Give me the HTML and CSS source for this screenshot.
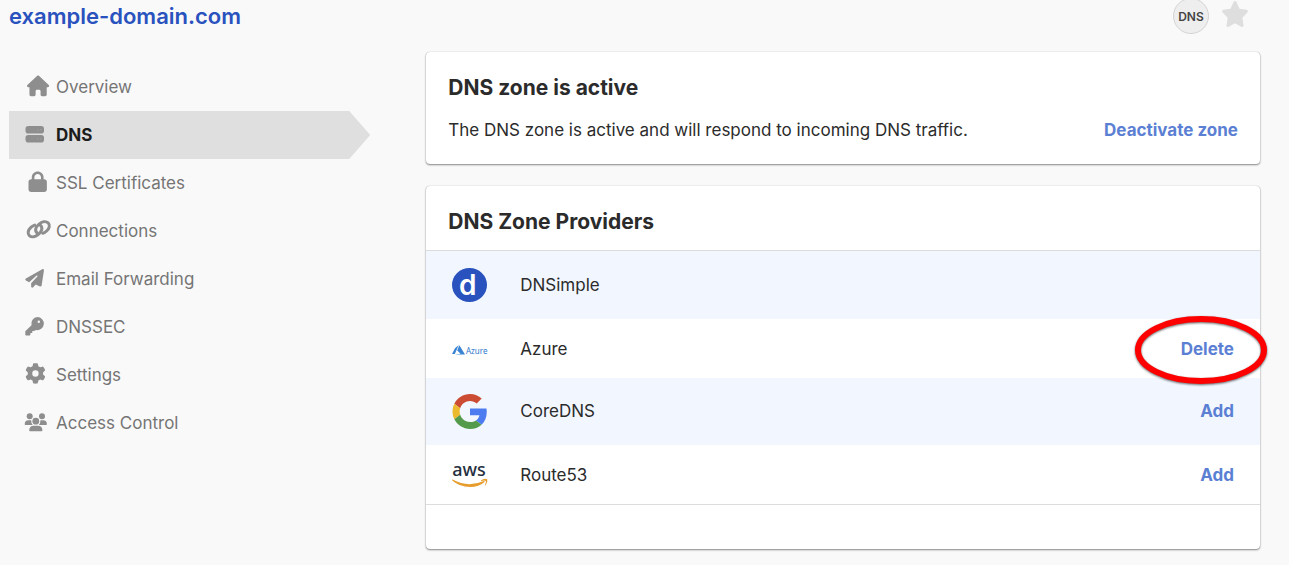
FILE: index.html
```html
<!DOCTYPE html>
<html lang="en">
<head>
<meta charset="utf-8">
<title>example-domain.com</title>
<meta name="viewport" content="width=device-width, initial-scale=1">
<link rel="stylesheet" href="styles.css">
</head>
<body>
<header class="page-header">
  <h1 class="domain"><a href="#">example-domain.com</a></h1>
  <span class="badge">DNS</span>
  <button class="star" type="button" aria-label="Favorite">
    <svg width="28" height="26" viewBox="0 0 576 512" preserveAspectRatio="none"><path fill="#dedede" d="M316.9 18C311.6 7 300.4 0 288.1 0s-23.4 7-28.8 18L195 150.3 51.4 171.5c-12 1.8-22 10.2-25.7 21.7s-.7 24.2 7.9 32.7L137.8 329 113.2 474.7c-2 12 3 24.2 12.9 31.3s23 8 33.8 2.3l128.3-68.5 128.3 68.5c10.8 5.7 23.9 4.9 33.8-2.3s14.9-19.3 12.9-31.3L438.5 329 542.7 225.9c8.6-8.5 11.7-21.2 7.9-32.7s-13.7-19.9-25.7-21.7L381.2 150.3 316.9 18z"/></svg>
  </button>
</header>
<div class="layout">
  <nav class="sidebar">
    <a class="nav-link" href="#">
      <svg class="nav-icon" viewBox="0 0 28 24"><path transform="translate(2 .5) scale(.0385 .0405)" d="M575.8 255.5c0 18-15 32.1-32 32.1h-32l.7 160.2c0 2.7-.2 5.4-.5 8.1V472c0 22.1-17.9 40-40 40H392c-22.1 0-40-17.9-40-40V384c0-17.7-14.3-32-32-32H256c-17.7 0-32 14.3-32 32v88c0 22.1-17.9 40-40 40H104c-22.1 0-40-17.9-40-40V287.6H32c-18 0-32-14-32-32.1c0-9 3-17 10-24L266.4 8c7-7 15-8 22-8s15 2 21 7L564.8 231.5c8 7 12 15 11 24z"/></svg>
      <span>Overview</span>
    </a>
    <a class="nav-link active" href="#" aria-current="page">
      <svg class="nav-icon" viewBox="0 0 28 24"><rect x=".5" y="3" width="18.5" height="7.5" rx="2.8"/><rect x=".5" y="12" width="18.5" height="7.5" rx="2.8"/><g fill="#a6a6a6"><circle cx="12.8" cy="6.8" r=".6"/><circle cx="15.8" cy="6.8" r=".6"/><circle cx="12.8" cy="15.8" r=".6"/><circle cx="15.8" cy="15.8" r=".6"/></g></svg>
      <span>DNS</span>
    </a>
    <a class="nav-link" href="#">
      <svg class="nav-icon" viewBox="0 0 28 24"><path transform="translate(3.5 .5) scale(.041 .04)" d="M144 144v48H304V144c0-44.2-35.8-80-80-80s-80 35.8-80 80zM80 192V144C80 64.5 144.5 0 224 0s144 64.5 144 144v48h16c35.3 0 64 28.7 64 64V448c0 35.3-28.7 64-64 64H64c-35.3 0-64-28.7-64-64V256c0-35.3 28.7-64 64-64H80z"/></svg>
      <span>SSL Certificates</span>
    </a>
    <a class="nav-link" href="#">
      <svg class="nav-icon" viewBox="0 0 28 24"><g fill="none" stroke="#8e8e8e" stroke-width="3" stroke-linecap="round"><path d="M12.200 14.200C9.400 11.600 10.600 8 13.800 5.300C16.900 2.600 20.800 1.700 23.100 3.800C25.400 6.200 24.400 9.400 21.600 12C20.400 13.100 19.200 13.900 17.800 14.300"/><path d="M15.300 6.200C18.100 8.800 16.900 12.400 13.700 15.100C10.600 17.800 6.700 18.700 4.400 16.600C2.100 14.200 3.100 11 5.900 8.400C7.100 7.300 8.300 6.500 9.700 6.100"/></g></svg>
      <span>Connections</span>
    </a>
    <a class="nav-link" href="#">
      <svg class="nav-icon" viewBox="0 0 28 24"><path transform="translate(.3 2) scale(.0365)" d="M498.1 5.600c10.100 7 15.400 19.100 13.500 31.200l-64 416c-1.500 9.700-7.400 18.200-16 23s-18.900 5.400-28 1.600L284 427.700l-68.500 74.100c-8.900 9.700-22.900 12.900-35.200 8.100S160 493.200 160 480V396.400c0-4 1.500-7.800 4.200-10.700L331.800 202.800c5.800-6.300 5.600-16-.4-22s-15.700-6.400-22-.7L106 360.800 17.700 316.600C7.100 311.300 .3 300.700 0 288.900s5.900-22.800 16.100-28.700l448-256c10.700-6.100 23.900-5.500 34 1.400z"/></svg>
      <span>Email Forwarding</span>
    </a>
    <a class="nav-link" href="#">
      <svg class="nav-icon" viewBox="0 0 28 24"><path fill-rule="evenodd" d="M12.400 2a6.600 6.600 0 1 1-1.300 13.100L9 16H7.300v1.900H5.400v1.600q0 .9-.9.900H1.200Q.3 20.400.3 19.500v-3.200L6.500 10.200A6.600 6.600 0 0 1 12.400 2zM13.800 5.500a1.200 1.200 0 1 0 0 2.400a1.200 1.200 0 1 0 0-2.400z"/></svg>
      <span>DNSSEC</span>
    </a>
    <a class="nav-link" href="#">
      <svg class="nav-icon" viewBox="0 0 28 24"><path transform="translate(.2 .2) scale(.04)" d="M495.900 166.600c3.200 8.700 .5 18.400-6.400 24.600l-43.300 39.400c1.100 8.300 1.700 16.800 1.700 25.400s-.6 17.100-1.700 25.400l43.300 39.400c6.900 6.200 9.600 15.900 6.400 24.600c-4.400 11.900-9.700 23.300-15.800 34.300l-4.700 8.100c-6.600 11-14 21.400-22.100 31.200c-5.900 7.200-15.700 9.600-24.500 6.800l-55.700-17.700c-13.400 10.300-28.200 18.900-44 25.400l-12.500 57.100c-2 9.100-9 16.300-18.200 17.800c-13.800 2.300-28 3.500-42.500 3.500s-28.700-1.200-42.500-3.500c-9.200-1.500-16.200-8.700-18.200-17.800l-12.500-57.100c-15.800-6.500-30.600-15.100-44-25.400L83.100 425.900c-8.800 2.800-18.600 .3-24.500-6.800c-8.100-9.800-15.500-20.200-22.100-31.200l-4.700-8.100c-6.100-11-11.400-22.400-15.800-34.300c-3.200-8.700-.5-18.400 6.400-24.600l43.300-39.400C64.600 273.100 64 264.600 64 256s.6-17.100 1.700-25.400L22.400 191.200c-6.900-6.200-9.600-15.900-6.400-24.600c4.400-11.900 9.700-23.300 15.800-34.300l4.700-8.100c6.600-11 14-21.400 22.100-31.200c5.900-7.200 15.700-9.600 24.500-6.800l55.700 17.700c13.400-10.300 28.200-18.900 44-25.400l12.500-57.100c2-9.100 9-16.300 18.200-17.800C227.300 1.200 241.500 0 256 0s28.700 1.200 42.500 3.500c9.200 1.500 16.200 8.700 18.200 17.800l12.500 57.100c15.800 6.500 30.600 15.100 44 25.400l55.700-17.700c8.800-2.800 18.600-.3 24.500 6.800c8.100 9.800 15.500 20.200 22.100 31.200l4.700 8.100c6.100 11 11.400 22.400 15.800 34.300zM256 336a80 80 0 1 0 0-160 80 80 0 1 0 0 160z"/></svg>
      <span>Settings</span>
    </a>
    <a class="nav-link" href="#">
      <svg class="nav-icon" viewBox="0 0 28 24"><circle cx="4.700" cy="5.200" r="3"/><circle cx="17" cy="5.200" r="3"/><circle cx="10.800" cy="10.200" r="3.400"/><path d="M-.3 13.200Q-.3 9.300 3.400 9.300H6.200Q6 12 7.700 14H.4Q-.3 14-.3 13.200zM21.900 13.200Q21.900 9.300 18.200 9.300H15.400Q15.600 12 13.900 14h7.300Q21.900 14 21.900 13.200zM4.200 19.500Q4.200 14.800 8.700 14.800H13Q17.400 14.800 17.400 19.500Q17.400 20.300 16.600 20.300H5Q4.200 20.300 4.200 19.500z"/></svg>
      <span>Access Control</span>
    </a>
  </nav>
  <main class="content">
    <section class="card status">
      <h2 class="card-title">DNS zone is active</h2>
      <div class="status-row">
        <p class="status-text">The DNS zone is active and will respond to incoming DNS traffic.</p>
        <button class="action" type="button">Deactivate zone</button>
      </div>
    </section>
    <section class="card providers">
      <h2 class="card-title providers-title">DNS Zone Providers</h2>
      <ul class="provider-list">
        <li class="provider">
          <svg class="logo" width="36" height="36" viewBox="0 0 36 36"><ellipse cx="17.500" cy="18" rx="17.500" ry="17" fill="#2a52be"/><text class="logo-d" x="7" y="28">d</text></svg>
          <span class="provider-name">DNSimple</span>
        </li>
        <li class="provider">
          <svg class="logo" width="36" height="12" viewBox="0 0 36 12"><path fill="#3b84d4" d="M6.800 1L3 4.300L0 9.900h2.800zM7.400 1.300L5.200 6.400L8.600 9.800L2.600 10.600H13z"/><text class="logo-azure" x="14" y="10">Azure</text></svg>
          <span class="provider-name">Azure</span>
          <span class="marked"><button class="action" type="button">Delete</button><svg class="marker" viewBox="0 0 134 70"><ellipse cx="67" cy="35" rx="63" ry="31"/></svg></span>
        </li>
        <li class="provider">
          <svg class="logo" width="36" height="35" viewBox="0 0 48 48"><path fill="#cc4b33" d="M24 9.500c3.540 0 6.710 1.220 9.210 3.600l6.850-6.850C35.900 2.380 30.470 0 24 0 14.620 0 6.510 5.380 2.560 13.220l7.980 6.190C12.430 13.720 17.740 9.500 24 9.500z"/><path fill="#4c7cf0" d="M46.980 24.550c0-1.570-.15-3.090-.38-4.550H24v9.020h12.940c-.58 2.960-2.260 5.480-4.780 7.180l7.730 6c4.510-4.180 7.090-10.360 7.090-17.650z"/><path fill="#edb92e" d="M10.530 28.590c-.48-1.450-.76-2.990-.76-4.590s.27-3.140.76-4.590l-7.980-6.190C.92 16.460 0 20.120 0 24c0 3.880.92 7.540 2.560 10.780l7.970-6.190z"/><path fill="#539a4c" d="M24 48c6.480 0 11.930-2.130 15.890-5.810l-7.730-6c-2.150 1.450-4.920 2.300-8.160 2.300-6.260 0-11.570-4.220-13.470-9.910l-7.980 6.190C6.510 42.620 14.620 48 24 48z"/></svg>
          <span class="provider-name">CoreDNS</span>
          <button class="action" type="button">Add</button>
        </li>
        <li class="provider">
          <svg class="logo" width="36" height="24" viewBox="0 0 36 24"><text class="logo-aws" x="17" y="12">aws</text><path fill="#e79d2c" d="M.7 15.600Q16 24 31.700 16.900Q33.200 16.800 32.500 18Q27 23 18 23Q7.500 23 .3 16.500Q-.2 15.500 .7 15.600z"/><path fill="#e79d2c" d="M29 16.200Q32.500 13.800 35.300 15.200Q36 18.500 33.400 21.400Q32.600 21.800 33 20.800Q34.300 18 33.900 16.900Q32.500 16.300 29.500 16.900Q28.500 16.800 29 16.200z"/></svg>
          <span class="provider-name">Route53</span>
          <button class="action" type="button">Add</button>
        </li>
      </ul>
    </section>
  </main>
</div>
</body>
</html>
```
FILE: styles.css
```css
* { box-sizing: border-box; }
body {
  margin: 0;
  padding: 0 29px 16px 9px;
  background: #f9f9f9;
  color: #2b2b2b;
  font: 17px/27px Inter, "Liberation Sans", sans-serif;
}
h1, h2, p, ul { margin: 0; padding: 0; }
button { border: 0; padding: 0; background: none; font: inherit; cursor: pointer; }
a { color: inherit; text-decoration: none; }

.page-header { display: flex; align-items: center; height: 32px; padding-right: 11px; }
.domain { flex: 1; color: #2a52be; font-size: 22px; font-weight: 600; }
.badge {
  display: flex; align-items: center; justify-content: center;
  width: 36px; height: 36px; margin-right: 12px;
  border: 1px solid #d4d4d4; border-radius: 50%;
  background: #eee; color: #444; font-size: 12px; font-weight: 600;
}
.star { display: flex; padding-bottom: 4px; }

.layout { display: grid; grid-template-columns: 13fr 30fr; column-gap: 56px; padding-top: 20px; }
.sidebar { display: flex; flex-direction: column; padding-top: 11px; }
.nav-link { display: flex; align-items: center; gap: 3px; height: 48px; padding-left: 16px; color: #757575; }
.nav-link.active {
  background: #dfdfdf; color: #1c1c1c; font-weight: 700;
  clip-path: polygon(0 0, calc(100% - 21px) 0, 100% 50%, calc(100% - 21px) 100%, 0 100%);
}
.nav-icon { flex: none; width: 28px; height: 24px; fill: #8e8e8e; overflow: visible; }

.content { display: flex; flex-direction: column; gap: 22px; min-width: 0; }
.card {
  background: #fff; border-radius: 4px;
  box-shadow: 0 1px 2px rgba(0, 0, 0, .45), 0 0 1px rgba(0, 0, 0, .3);
}
.status { padding: 22px 22px 20px; }
.card-title { font-size: 21px; font-weight: 700; }
.status-row { display: flex; align-items: center; justify-content: space-between; gap: 16px; padding-top: 16px; }
.action { color: #5b80d3; font-weight: 700; }
.providers { padding-bottom: 44px; }
.providers-title { padding: 22px 22px 15px; }
.provider-list { list-style: none; border: solid #dcdcdc; border-width: 1px 0; }
.provider { display: flex; align-items: center; padding: 16px 26px; }
.provider:nth-child(odd) { background: #f2f7ff; }
.provider:nth-child(even) { padding: 17px 26px 15px; }
.logo { flex: none; overflow: visible; }
.provider-name { flex: 1; margin-left: 32px; }
.logo-d { font: 600 28px/28px Inter, sans-serif; fill: #fff; }
.logo-azure { font: 8px/8px "Noto Sans", sans-serif; fill: #2f78cc; }
.logo-aws { font: 500 18px/18px "Noto Sans", sans-serif; fill: #252f3e; text-anchor: middle; }
.marked { position: relative; display: flex; }
.marker {
  position: absolute; top: -21px; right: -34px;
  width: 134px; height: 70px; pointer-events: none;
  fill: none; stroke: #f00; stroke-width: 6;
  filter: drop-shadow(0 1px 1px rgba(0, 0, 0, .6));
}
```
